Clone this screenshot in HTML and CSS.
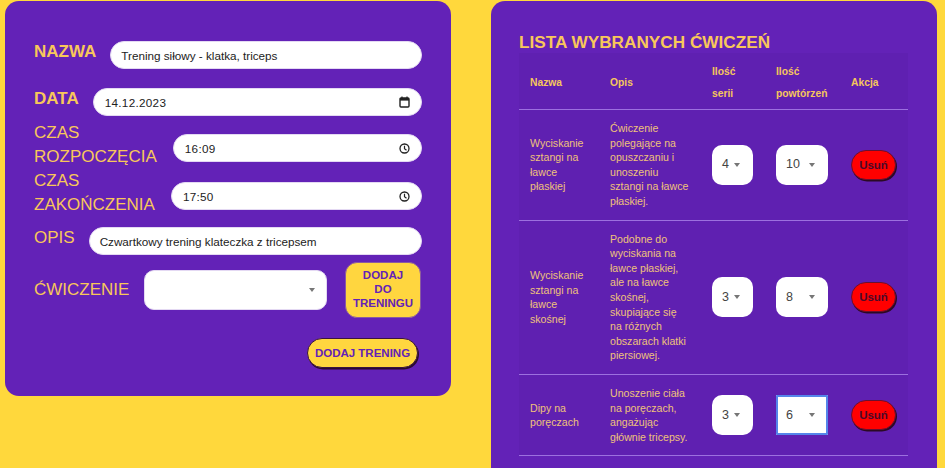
FILE: index.html
```html
<!DOCTYPE html>
<html lang="pl">
<head>
<meta charset="utf-8">
<title>Trening</title>
<link rel="stylesheet" href="styles.css">
</head>
<body>
<main class="page">
  <section class="card form-card">
    <div class="row">
      <label class="label label-bold">NAZWA</label>
      <div class="field"><span>Trening siłowy - klatka, triceps</span></div>
    </div>
    <div class="row row-date">
      <label class="label label-bold">DATA</label>
      <div class="field"><span class="spaced">14.12.2023</span>
        <svg class="icon" width="11" height="12" viewBox="0 0 11 12"><rect x="1" y="2" width="9" height="9" rx="1" fill="none" stroke="#222" stroke-width="1.4"/><rect x="1" y="2" width="9" height="2.6" fill="#222"/><path d="M3 0.5v2M8 0.5v2" stroke="#222" stroke-width="1.2"/></svg>
      </div>
    </div>
    <div class="row row-start">
      <label class="label label-wrap">CZAS ROZPOCZĘCIA</label>
      <div class="field"><span class="spaced">16:09</span>
        <svg class="icon" width="11" height="11" viewBox="0 0 11 11"><circle cx="5.5" cy="5.5" r="4.5" fill="none" stroke="#222" stroke-width="1.3"/><path d="M5.5 2.8v3l2 1.5" fill="none" stroke="#222" stroke-width="1.2"/></svg>
      </div>
    </div>
    <div class="row">
      <label class="label label-wrap">CZAS ZAKOŃCZENIA</label>
      <div class="field"><span class="spaced">17:50</span>
        <svg class="icon" width="11" height="11" viewBox="0 0 11 11"><circle cx="5.5" cy="5.5" r="4.5" fill="none" stroke="#222" stroke-width="1.3"/><path d="M5.5 2.8v3l2 1.5" fill="none" stroke="#222" stroke-width="1.2"/></svg>
      </div>
    </div>
    <div class="row row-desc">
      <label class="label">OPIS</label>
      <div class="field"><span>Czwartkowy trening klateczka z tricepsem</span></div>
    </div>
    <div class="row row-exercise">
      <label class="label">ĆWICZENIE</label>
      <div class="select-box"><span class="caret"></span></div>
      <button class="btn-add"><span class="btn-add-text">DODAJ DO TRENINGU</span></button>
    </div>
    <div class="row-submit">
      <button class="btn-submit">DODAJ TRENING</button>
    </div>
  </section>

  <section class="card list-card">
    <h2 class="list-title">LISTA WYBRANYCH ĆWICZEŃ</h2>
    <div class="table-wrap">
      <table class="ex-table">
        <colgroup>
          <col class="c-name"><col class="c-desc"><col class="c-sets"><col class="c-reps"><col class="c-act">
        </colgroup>
        <thead>
          <tr><th>Nazwa</th><th>Opis</th><th>Ilość serii</th><th>Ilość powtórzeń</th><th>Akcja</th></tr>
        </thead>
        <tbody>
          <tr>
            <td>Wyciskanie sztangi na ławce płaskiej</td>
            <td>Ćwiczenie polegające na opuszczaniu i unoszeniu sztangi na ławce płaskiej.</td>
            <td><div class="num-select sel-sets"><span>4</span><span class="caret"></span></div></td>
            <td><div class="num-select sel-reps"><span>10</span><span class="caret"></span></div></td>
            <td><button class="btn-delete">Usuń</button></td>
          </tr>
          <tr>
            <td>Wyciskanie sztangi na ławce skośnej</td>
            <td>Podobne do wyciskania na ławce płaskiej, ale na ławce skośnej, skupiające się na różnych obszarach klatki piersiowej.</td>
            <td><div class="num-select sel-sets"><span>3</span><span class="caret"></span></div></td>
            <td><div class="num-select sel-reps"><span>8</span><span class="caret"></span></div></td>
            <td><button class="btn-delete">Usuń</button></td>
          </tr>
          <tr>
            <td>Dipy na poręczach</td>
            <td>Unoszenie ciała na poręczach, angażując głównie tricepsy.</td>
            <td><div class="num-select sel-sets"><span>3</span><span class="caret"></span></div></td>
            <td><div class="num-select sel-reps is-focused"><span>6</span><span class="caret"></span></div></td>
            <td><button class="btn-delete">Usuń</button></td>
          </tr>
        </tbody>
      </table>
    </div>
  </section>
</main>
</body>
</html>
```
FILE: styles.css
```css
html, body {
  margin: 0;
  padding: 0;
  overflow: hidden;
}
body {
  background: #FFD83C;
  font-family: "Liberation Sans", Arial, sans-serif;
  width: 945px;
  height: 468px;
}
.page {
  display: flex;
  align-items: flex-start;
  gap: 40px;
  padding: 1px 8px 0 5px;
}
.card {
  width: 446px;
  box-sizing: border-box;
  background: #6322B7;
  border-radius: 14px;
}

/* ---------- form card ---------- */
.form-card {
  padding: 34px 29px 28px 29px;
  display: flex;
  flex-direction: column;
}
.row {
  display: flex;
  align-items: center;
  gap: 14px;
}
.row-date { margin-top: 13px; }
.row-start { margin-top: 5px; }
.row-desc { margin-top: 4px; }
.row-exercise { margin-top: 7px; gap: 15px; }
.label {
  font-size: 17px;
  line-height: 24px;
  color: #F8C75A;
  white-space: nowrap;
}
.label-bold { font-weight: bold; }
.label-wrap {
  white-space: normal;
  width: min-content;
  margin-right: 2px;
}
.field {
  flex: 1;
  height: 28px;
  margin-top: 6px;
  box-sizing: border-box;
  background: #fff;
  border: 1px solid #e4d9f3;
  border-radius: 14px;
  display: flex;
  align-items: center;
  justify-content: space-between;
  padding: 0 11px 0 10px;
  font-size: 11.7px;
  color: #222;
}
.spaced { letter-spacing: 0.3px; padding-left: 1px; }
.icon { display: block; }
.select-box {
  flex: 1;
  height: 40px;
  box-sizing: border-box;
  background: #fff;
  border: 1px solid #e4d9f3;
  border-radius: 10px;
  display: flex;
  align-items: center;
  justify-content: flex-end;
  padding-right: 11px;
}
.caret {
  width: 0;
  height: 0;
  border-left: 3.5px solid transparent;
  border-right: 3.5px solid transparent;
  border-top: 4px solid #767676;
}
.btn-add {
  width: 76px;
  height: 56px;
  margin-left: 3px;
  margin-right: 1px;
  padding: 0;
  background: #FFD63F;
  border: 1px solid #8a5aa0;
  border-radius: 12px;
  color: #6322B7;
  font-family: "Liberation Sans", Arial, sans-serif;
  font-weight: bold;
  font-size: 11.5px;
  line-height: 13.8px;
}
.btn-add-text {
  display: block;
  width: min-content;
  margin: 0 auto;
}
.row-submit {
  display: flex;
  justify-content: flex-end;
  margin-top: 20px;
  padding-right: 4px;
}
.btn-submit {
  width: 111px;
  height: 30px;
  padding: 0;
  background: #FFD63F;
  border: 1px solid #3a1440;
  border-radius: 15px;
  box-shadow: 1px 1.5px 0 #2a0a30;
  color: #6322B7;
  font-family: "Liberation Sans", Arial, sans-serif;
  font-weight: bold;
  font-size: 11.5px;
}

/* ---------- list card ---------- */
.list-card {
  padding: 31px 29px 0 28px;
  min-height: 520px;
}
.list-title {
  margin: 0;
  font-size: 17.2px;
  line-height: 20px;
  font-weight: bold;
  color: #F8C75A;
}
.table-wrap {
  margin-top: 1px;
  background: rgba(40, 0, 80, 0.05);
}
.ex-table {
  width: 389px;
  border-collapse: collapse;
  table-layout: fixed;
}
.c-name { width: 80px; }
.c-desc { width: 102px; }
.c-sets { width: 64px; }
.c-reps { width: 75px; }
.c-act { width: 68px; }
.ex-table th {
  padding: 8px 11px 4px;
  line-height: 22px;
  font-size: 10.3px;
  font-weight: bold;
  text-align: left;
  vertical-align: middle;
  color: #F6C65C;
  border-bottom: 1px solid #9C70DF;
}
.ex-table td {
  padding: 11px;
  font-size: 10.6px;
  line-height: 14.6px;
  color: #EFC27A;
  vertical-align: middle;
  border-bottom: 1px solid #9C70DF;
}
.num-select {
  height: 40px;
  box-sizing: border-box;
  background: #fff;
  border-radius: 10px;
  display: flex;
  align-items: center;
  padding-left: 10px;
  padding-right: 13px;
  font-size: 12.5px;
  color: #444;
}
.num-select .caret { margin-left: auto; }
.sel-sets { width: 41px; }
.sel-reps { width: 52px; }
.num-select.is-focused {
  border-radius: 1px;
  box-shadow: inset 0 0 0 2px #5585EA;
}
.btn-delete {
  width: 45px;
  height: 30px;
  padding: 0;
  background: #FF0000;
  border: 1px solid #6a1030;
  border-radius: 15px;
  box-shadow: 1px 1.5px 0 #2b0a25;
  color: #4B0A2A;
  font-family: "Liberation Sans", Arial, sans-serif;
  font-weight: bold;
  font-size: 11.5px;
}
```
